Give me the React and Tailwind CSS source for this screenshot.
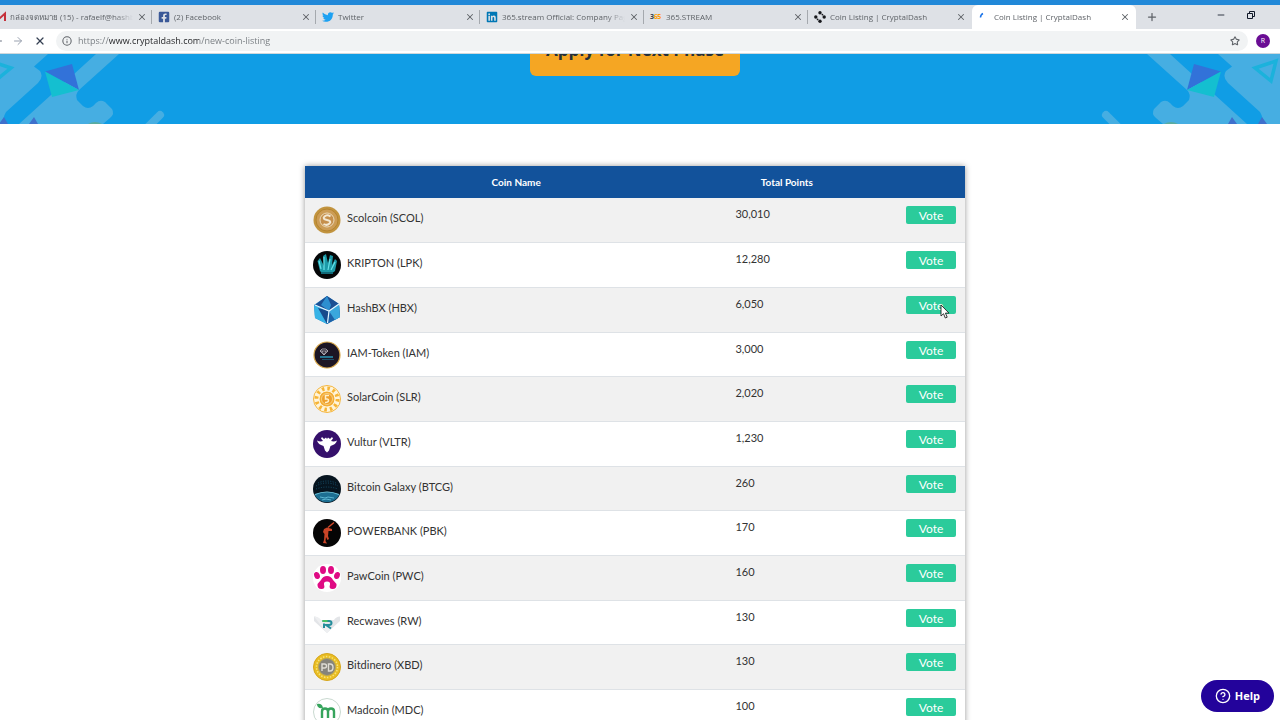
import React, { useState } from 'react';
import { ArrowLeft, ArrowRight, X, Info, Star, Plus, Minus, CircleHelp } from 'lucide-react';
import { FaFacebookSquare, FaTwitter, FaLinkedin } from 'react-icons/fa';

const DotsLogo = () => (
  <svg viewBox="0 0 12 12" className="h-3 w-3 shrink-0" fill="#17181c" aria-hidden="true">
    <circle cx="6" cy="1.8" r="1.7" />
    <circle cx="6" cy="10.2" r="1.7" />
    <circle cx="1.8" cy="6" r="1.7" />
    <circle cx="10.2" cy="6" r="1.7" />
    <circle cx="8.4" cy="3.6" r="0.9" />
    <circle cx="3.6" cy="8.4" r="0.9" />
  </svg>
);

const GmailLogo = () => (
  <svg viewBox="0 0 12 12" className="h-3 w-3 shrink-0" fill="none" stroke="#c5303a" strokeWidth="2" aria-hidden="true">
    <path d="M1 10V2.5L6 7l5-4.5V10" />
  </svg>
);

const StreamLogo = () => (
  <span className="w-3 shrink-0 text-[7px] font-bold tracking-tighter text-gray-700" aria-hidden="true">
    3<span className="text-amber-500">65</span>
  </span>
);

const Spinner = () => (
  <svg viewBox="0 0 12 12" className="h-3 w-3 shrink-0" fill="none" stroke="#1a73e8" strokeWidth="1.5" aria-hidden="true">
    <path d="M2.500 6.500A4.500 4.500 0 0 1 5 2.500" />
  </svg>
);

const tabs = [
  { id: 1, title: 'กล่องจดหมาย (15) - rafaelf@hashb', icon: <GmailLogo /> },
  { id: 2, title: '(2) Facebook', icon: <FaFacebookSquare className="h-3 w-3 shrink-0 text-[#3b5998]" /> },
  { id: 3, title: 'Twitter', icon: <FaTwitter className="h-3 w-3 shrink-0 text-[#1da1f2]" /> },
  { id: 4, title: '365.stream Official: Company Pag', icon: <FaLinkedin className="h-3 w-3 shrink-0 text-[#0077b5]" /> },
  { id: 5, title: '365.STREAM', icon: <StreamLogo /> },
  { id: 6, title: 'Coin Listing | CryptalDash', icon: <DotsLogo /> },
  { id: 7, title: 'Coin Listing | CryptalDash', icon: <Spinner /> },
];

const TabStrip = () => {
  const [active, setActive] = useState(7);

  return (
    <div className="flex h-6 items-stretch bg-[#dee1e6] text-[#5f6368]">
      <div className="-ml-3 flex min-w-0 flex-1">
        {tabs.map((tab) => (
          <div
            key={tab.id}
            className={`flex w-[164px] min-w-0 items-center gap-1 pr-1.5 pl-1.5 ${
              tab.id === active ? 'rounded-t-md bg-white' : ''
            }`}
          >
            {tab.icon}
            <button
              type="button"
              onClick={() => setActive(tab.id)}
              className="min-w-0 flex-1 overflow-hidden mask-r-from-85% text-left text-[8px] leading-4 whitespace-nowrap"
            >
              {tab.title}
            </button>
            <button type="button" aria-label="Close tab" className="shrink-0">
              <X className="h-2.5 w-2.5" strokeWidth={2.5} />
            </button>
            {tab.id < 6 && <span className="-mr-1.5 h-3.5 w-px shrink-0 bg-[#a5a9ae]" />}
          </div>
        ))}
        <button type="button" aria-label="New tab" className="ml-2.5">
          <Plus className="h-3 w-3" strokeWidth={2.5} />
        </button>
      </div>
      <div className="flex items-center gap-5 pr-6 pb-1 text-gray-900">
        <button type="button" aria-label="Minimize">
          <Minus className="h-2.5 w-2.5" />
        </button>
        <button type="button" aria-label="Restore">
          <svg viewBox="0 0 10 10" className="h-2.5 w-2.5" fill="none" stroke="currentColor">
            <path d="M1.500 3.500h5v5h-5zM3.500 3.500v-2h5v5h-2" />
          </svg>
        </button>
      </div>
    </div>
  );
};

const Toolbar = () => (
  <div className="flex h-[25px] items-center border-b border-[#cfd8dc] bg-white pr-2.5 text-[#5f6368]">
    <button type="button" aria-label="Back" className="-ml-2">
      <ArrowLeft className="h-3 w-3 text-gray-500" />
    </button>
    <button type="button" aria-label="Forward" className="ml-2">
      <ArrowRight className="h-3 w-3 text-gray-400" />
    </button>
    <button type="button" aria-label="Stop loading" className="ml-2.5">
      <X className="h-3 w-3 text-gray-700" strokeWidth={2.5} />
    </button>
    <div className="ml-2.5 flex h-5 flex-1 items-center rounded-full bg-[#f1f3f4] pr-2 pl-1.5">
      <Info className="h-2.5 w-2.5 shrink-0" strokeWidth={2.5} />
      <input
        type="text"
        aria-label="Address"
        defaultValue="https://www.cryptaldash.com/new-coin-listing"
        className="ml-1.5 min-w-0 flex-1 bg-[linear-gradient(to_right,#74797e_31px,#202124_31px,#202124_121px,#74797e_121px)] bg-clip-text text-[9px] leading-4 text-transparent outline-none"
      />
      <button type="button" aria-label="Bookmark this page">
        <Star className="h-2.5 w-2.5" strokeWidth={2.5} />
      </button>
    </div>
    <button
      type="button"
      aria-label="Profile"
      className="ml-2 h-3.5 w-3.5 rounded-full bg-[#6a0d94] text-[7px] leading-3 text-white"
    >
      R
    </button>
  </div>
);

const BannerShapes = () => (
  <>
    <g fill="#46aee2">
      <path d="M57 0 97 36Q101 40 99 46L93 52Q88 56 83 52L80 49Q76 45 71 48L64 55Q61 60 66 64L73 70H157L125 41 80 0Z" />
      <path d="M128 0 142 12.500 136 17Q132 23 138 29L170 58Q173 63 173 70H194V0Z" />
      <path d="M16 61 30 75" stroke="#46aee2" strokeWidth="8" strokeLinecap="round" />
    </g>
    <path d="M104 10 131 17.500 97 36Z" fill="#3272d9" />
    <path d="M131 17.500 124 43 97 36Z" fill="#14bfd0" />
    <path d="M165 14 186 7 181 27Z" fill="none" stroke="#1bb2dc" strokeWidth="3.500" />
    <path d="M138 70 142 63 147 70ZM168 70 172 63 177 70Z" fill="#3f70cc" />
    <path d="M74 70Q81 66 88 70Z" fill="#5aac9f" />
  </>
);

const Banner = () => (
  <section className="flex h-[70px] items-end justify-between overflow-hidden bg-[#109de5]">
    <svg viewBox="0 0 180 70" className="h-[70px] w-[180px] shrink-0" aria-hidden="true">
      <g transform="translate(176 0) scale(-1 1)">
        <BannerShapes />
      </g>
    </svg>
    <button
      type="button"
      className="mb-12 h-[52px] shrink-0 rounded-md bg-[#f5a623] px-4 font-['Open_Sans',sans-serif] text-[17px] leading-5 font-bold text-[#25303b]"
    >
      Apply for Next Phase
    </button>
    <svg viewBox="0 0 190 70" className="h-[70px] w-[190px] shrink-0" aria-hidden="true">
      <BannerShapes />
    </svg>
  </section>
);

const ScolIcon = () => (
  <>
    <circle cx="14" cy="14" r="13.500" fill="#c2943f" />
    <circle cx="14" cy="14" r="11" fill="#cc9c55" stroke="#b5842f" />
    <circle cx="14" cy="14" r="7" fill="#c58f4c" stroke="#ead7b5" />
    <path d="M17.500 10.500Q14 8 11.500 10.500T14 14t2.500 3.500-6 .5" fill="none" stroke="#f3e8d2" strokeWidth="2" />
  </>
);

const KriptonIcon = () => (
  <>
    <circle cx="14" cy="14" r="14" fill="#050708" />
    <path d="M7 20 4.500 10 7 7l4 8-1-10 3-2 2 9 2-8 3 1-1 9 3-6 2 2-2 10-4 3H10Z" fill="#1d9aa8" />
    <path d="m8 18-2-8m5 9V6m4 13 2-11m1 11 4-8" stroke="#67e2e8" strokeWidth="1.200" />
    <path d="M8 22h12" stroke="#126a78" strokeWidth="2" />
  </>
);

const HashIcon = () => (
  <>
    <path d="M14 0 26 8 27 21 14 28 2 22 1 9Z" fill="#1f7fc4" />
    <path d="M14 0 26 8 16 15 2 9Z" fill="#1b4f93" />
    <path d="M14 0 18 9 16 15 8 9Z" fill="#2d8fd0" />
    <path d="M1 9 16 15 14 28 2 22Z" fill="#37b3e6" />
    <path d="M5 12 16 15 14 28Z" fill="#174a8c" />
    <path d="M16 15 26 8 27 21 14 28Z" fill="#1d62a8" />
    <path d="M16 15 22 24 27 21 26 8Z" fill="#3aa7dd" />
    <path d="m2 9 14 6 10-7M16 15l-1.500 12" fill="none" stroke="#e6f6ff" strokeWidth="1.200" />
  </>
);

const IamIcon = () => (
  <>
    <circle cx="14" cy="14" r="13" fill="#1c1524" stroke="#d6a548" strokeWidth="1.200" />
    <path d="m7 10 2-2h4l2 2-4 4ZM7 10h8m-6 0 2 4 2-4" fill="none" stroke="#b9b6bd" strokeWidth=".8" />
    <path d="M7 16h13" stroke="#277f9c" strokeWidth="1.800" />
    <path d="M9 18.500h12" stroke="#1f4e66" />
  </>
);

const SolarIcon = () => (
  <>
    <circle cx="14" cy="14" r="13.500" fill="#fff4d9" stroke="#f4b63f" />
    <circle cx="14" cy="14" r="10.500" fill="none" stroke="#f6b436" strokeWidth="4" strokeDasharray="2.500 3" />
    <circle cx="14" cy="14" r="8" fill="#f4ae37" stroke="#fff4d9" />
    <circle cx="14" cy="14" r="5.500" fill="#ee9f2c" stroke="#f9cf7f" />
    <path d="M16 10.500h-3.500v3.500q3-.5 3 1.500t-3.500 2" fill="none" stroke="#fff0c8" strokeWidth="1.500" />
  </>
);

const VulturIcon = () => (
  <>
    <circle cx="14" cy="14" r="14" fill="#35106b" />
    <path d="M4 10.500Q7 12 10 11L8 8.500 9 7 11 9 13 7.500 14 9 15 7.500 17 9 19 7 20 8.500 18 11Q21 12 24 10.500 23 14.500 17.500 16L16 20.500 14 22.500 12 20.500 10.500 16Q5 14.500 4 10.500Z" fill="#fff" />
  </>
);

const GalaxyIcon = () => (
  <>
    <circle cx="14" cy="14" r="14" fill="#06141f" />
    <path d="M1.500 19.500Q14 15 26.500 19.500A14 14 0 0 1 1.500 19.500Z" fill="#1d6f92" />
    <path d="M2 19.500q12-5 24 0" fill="none" stroke="#6cc4dc" strokeWidth="1.200" />
    <path d="M7 22l5 1 3-1 6 1M9 25l4-1 5 1" fill="none" stroke="#5cb6d2" strokeWidth="1" />
    <path d="M3 11q11-6 22 0M5 8q9-4 18 0M3 14q11-4 22 0" fill="none" stroke="#17506a" strokeDasharray="1 1.500" />
  </>
);

const PowerIcon = () => (
  <>
    <circle cx="14" cy="14" r="14" fill="#060505" />
    <path d="M21 3.500 15 8.500" stroke="#d3492a" strokeWidth="1.400" />
    <path d="M11 10 14 8.500 19 10 19 12 15.500 12 15 17 16 20 14.500 21 13 18 12.500 22 14 24.500 10 24 11 21 11.500 15 10 13Z" fill="#c94427" />
  </>
);

const PawIcon = () => (
  <>
    <circle cx="14" cy="14" r="14" fill="#fff" />
    <g fill="#df0b84">
      <ellipse cx="10" cy="6" rx="3" ry="4" />
      <ellipse cx="18" cy="6" rx="3" ry="4" />
      <ellipse cx="4" cy="11.500" rx="2.800" ry="3.600" transform="rotate(-20 4 11.500)" />
      <ellipse cx="24" cy="11.500" rx="2.800" ry="3.600" transform="rotate(20 24 11.500)" />
      <path d="M14 12Q18 12 20 16L23.500 20Q24 25 19.500 25 15.500 25 17 20.500 17.500 17.500 14 17.500T11 20.500Q12.500 25 8.500 25 4 25 4.500 20L8 16Q10 12 14 12Z" />
    </g>
  </>
);

const RecwavesIcon = () => (
  <>
    <path d="M1 7.500Q5 7.500 7 11H21Q23 7.500 27 7.500V12L14 24 1 12Z" fill="#e3e5e8" />
    <path d="M1 7.500 14 24 18 20 8 11Q6 7.500 1 7.500Z" fill="#eeeff1" />
    <path d="M9.500 12H16q2.500 0 2.500 2T16 16h-3l5 3.500M11 14.500V19" fill="none" stroke="#248d9b" strokeWidth="2" />
    <path d="M9.500 12h5" stroke="#46bf61" strokeWidth="2" />
  </>
);

const BitdineroIcon = () => (
  <>
    <circle cx="14" cy="14" r="13.500" fill="#e9bd22" stroke="#d5a51c" />
    <circle cx="14" cy="14" r="10.500" fill="none" stroke="#f7e37b" strokeWidth="1.500" strokeDasharray="1.500 1.500" />
    <circle cx="14" cy="14" r="8.500" fill="#85837b" stroke="#b4a35b" />
    <path d="M9 18v-7h2.500q2 0 2 2t-2 2H9M15.500 11v7H17q3 0 3-3.500T17 11Z" fill="none" stroke="#dfddd5" strokeWidth="1.400" />
  </>
);

const MadcoinIcon = () => (
  <>
    <circle cx="14" cy="14" r="13.500" fill="#fff" stroke="#c9d9d0" />
    <path d="M9 20v-6.500q0-3 3-3t3 3V20m0-6.500q0-3 3-3t3 3V20" fill="none" stroke="#36a45c" strokeWidth="2.400" />
    <path d="M4 6q5-1 6 4-6 1-6-4Z" fill="#36a45c" />
  </>
);

const coins = [
  { name: 'Scolcoin (SCOL)', points: '30,010', Icon: ScolIcon },
  { name: 'KRIPTON (LPK)', points: '12,280', Icon: KriptonIcon },
  { name: 'HashBX (HBX)', points: '6,050', Icon: HashIcon, hovered: true },
  { name: 'IAM-Token (IAM)', points: '3,000', Icon: IamIcon },
  { name: 'SolarCoin (SLR)', points: '2,020', Icon: SolarIcon },
  { name: 'Vultur (VLTR)', points: '1,230', Icon: VulturIcon },
  { name: 'Bitcoin Galaxy (BTCG)', points: '260', Icon: GalaxyIcon },
  { name: 'POWERBANK (PBK)', points: '170', Icon: PowerIcon },
  { name: 'PawCoin (PWC)', points: '160', Icon: PawIcon },
  { name: 'Recwaves (RW)', points: '130', Icon: RecwavesIcon },
  { name: 'Bitdinero (XBD)', points: '130', Icon: BitdineroIcon },
  { name: 'Madcoin (MDC)', points: '100', Icon: MadcoinIcon },
];

const Pointer = () => (
  <svg viewBox="0 0 10 15" className="absolute top-2 left-[34px] h-[15px] w-2.5" aria-hidden="true">
    <path d="M1 1v11l2.500-2.300L5.300 14l1.900-.8-1.800-4.100H9Z" fill="#fff" stroke="#222" strokeWidth=".9" />
  </svg>
);

const CoinTable = () => (
  <table className="w-full max-w-[660px] table-fixed border-collapse bg-white text-[11px] text-[#333] shadow-[0_0_6px_rgba(0,0,0,0.4)]">
    <thead>
      <tr className="h-8 bg-[#12529b] text-[10px] text-white">
        <th className="w-[64%]">Coin Name</th>
        <th className="w-[18%]">Total Points</th>
        <th className="w-[18%]" aria-label="Vote" />
      </tr>
    </thead>
    <tbody>
      {coins.map(({ name, points, Icon, hovered }) => (
        <tr key={name} className="h-[45px] border-b border-[#dee2e6] align-top odd:bg-[#f1f1f1] nth-[3n+1]:h-11">
          <td className="px-2 pt-2">
            <div className="flex gap-1.5">
              <svg viewBox="0 0 28 28" className="h-7 w-7 shrink-0" aria-hidden="true">
                <Icon />
              </svg>
              <span className="pt-1 leading-4">{name}</span>
            </div>
          </td>
          <td className="px-2 pt-2 leading-4">{points}</td>
          <td className="px-[9px] pt-2">
            <div className="relative ml-auto w-[50px]">
              <button
                type="button"
                className="block h-[18px] w-full rounded-xs bg-[#2bcb9b] pt-0.5 text-xs leading-4 text-white"
              >
                Vote
              </button>
              {hovered && <Pointer />}
            </div>
          </td>
        </tr>
      ))}
    </tbody>
  </table>
);

const App = () => {
  return (
    <div className="flex h-screen flex-col overflow-hidden bg-white font-[Lato,sans-serif]">
      {/* Browser window */}
      <header className="shrink-0 border-t-[5px] border-[#2188d8] font-['Open_Sans','Noto_Sans',sans-serif]">
        <TabStrip />
        <Toolbar />
      </header>

      {/* Page */}
      <main className="min-h-0 flex-1 overflow-hidden">
        <Banner />
        <div className="flex justify-center pt-[42px] pr-2.5">
          <CoinTable />
        </div>
      </main>

      <button
        type="button"
        className="fixed right-1.5 bottom-2 flex h-8 items-center gap-1 rounded-full bg-[#23039b] px-3.5 font-['Open_Sans',sans-serif] text-[11px] font-bold text-white"
      >
        <CircleHelp className="h-4 w-4" />
        Help
      </button>
    </div>
  );
};

export default App;
